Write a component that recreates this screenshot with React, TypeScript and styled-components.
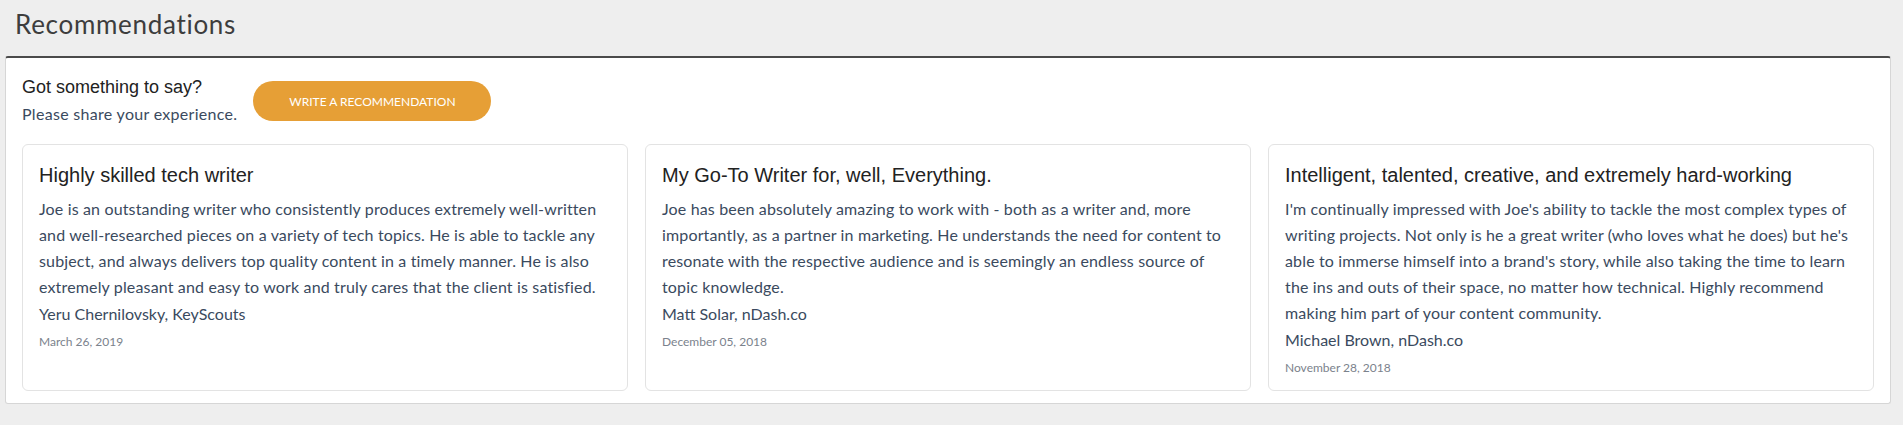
import styled, { createGlobalStyle } from "styled-components";

interface IRecommendation {
    title: string;
    body: string;
    author: string;
    date: string;
}

const recommendations: IRecommendation[] = [
    {
        title: "Highly skilled tech writer",
        body: "Joe is an outstanding writer who consistently produces extremely well-written and well-researched pieces on a variety of tech topics. He is able to tackle any subject, and always delivers top quality content in a timely manner. He is also extremely pleasant and easy to work and truly cares that the client is satisfied.",
        author: "Yeru Chernilovsky, KeyScouts",
        date: "March 26, 2019",
    },
    {
        title: "My Go-To Writer for, well, Everything.",
        body: "Joe has been absolutely amazing to work with - both as a writer and, more importantly, as a partner in marketing. He understands the need for content to resonate with the respective audience and is seemingly an endless source of topic knowledge.",
        author: "Matt Solar, nDash.co",
        date: "December 05, 2018",
    },
    {
        title: "Intelligent, talented, creative, and extremely hard-working",
        body: "I'm continually impressed with Joe's ability to tackle the most complex types of writing projects. Not only is he a great writer (who loves what he does) but he's able to immerse himself into a brand's story, while also taking the time to learn the ins and outs of their space, no matter how technical. Highly recommend making him part of your content community.",
        author: "Michael Brown, nDash.co",
        date: "November 28, 2018",
    },
];

const App = () => {
    return (
        <>
            <GlobalStyle />
            <Page>
                <Heading>Recommendations</Heading>
                <Panel>
                    <PanelHeader>
                        <Intro>
                            <IntroTitle>Got something to say?</IntroTitle>
                            <IntroText>Please share your experience.</IntroText>
                        </Intro>
                        <WriteButton type="button">Write a recommendation</WriteButton>
                    </PanelHeader>
                    <CardGrid>
                        {recommendations.map((item) => (
                            <Card key={item.title}>
                                <CardTitle>{item.title}</CardTitle>
                                <CardBody>{item.body}</CardBody>
                                <Author>{item.author}</Author>
                                <DateText>{item.date}</DateText>
                            </Card>
                        ))}
                    </CardGrid>
                </Panel>
            </Page>
        </>
    );
};

export default App;

const GlobalStyle = createGlobalStyle`
    html, body {
        margin: 0;
        padding: 0;
        background-color: #eeeeee;
    }
    * {
        box-sizing: border-box;
    }
`;

const Page = styled.div`
    background-color: #eeeeee;
    min-height: 425px;
    padding: 0 12px 0 5px;
`;

const Heading = styled.h2`
    margin: 0;
    height: 56px;
    padding: 8px 0 0 10px;
    font-family: Lato, "Open Sans", sans-serif;
    font-weight: 400;
    font-size: 26px;
    letter-spacing: 0.7px;
    line-height: 32px;
    color: #3d3d3d;
`;

const Panel = styled.section`
    background-color: #ffffff;
    border: 1px solid #d6d6d6;
    border-top: 2px solid #4a4a4a;
    border-radius: 3px;
    padding: 18px 16px 12px 16px;
`;

const PanelHeader = styled.div`
    display: flex;
    align-items: flex-start;
    gap: 16px;
`;

const Intro = styled.div`
    display: flex;
    flex-direction: column;
`;

const IntroTitle = styled.h3`
    margin: 0;
    font-family: "Liberation Sans", Arial, sans-serif;
    font-weight: 400;
    font-size: 18px;
    line-height: 22px;
    color: #222222;
`;

const IntroText = styled.p`
    margin: 6px 0 0 0;
    font-family: Lato, "Open Sans", sans-serif;
    font-size: 16px;
    letter-spacing: 0.3px;
    line-height: 20px;
    color: #3a4a5e;
`;

const WriteButton = styled.button`
    margin-top: 5px;
    width: 238px;
    height: 40px;
    border: none;
    border-radius: 20px;
    background-color: #e69f36;
    color: #ffffff;
    font-family: Lato, "Open Sans", sans-serif;
    font-size: 12px;
    text-transform: uppercase;
    cursor: pointer;
`;

const CardGrid = styled.div`
    display: grid;
    grid-template-columns: repeat(3, 1fr);
    gap: 17px;
    margin-top: 20px;
`;

const Card = styled.article`
    border: 1px solid #e3e3e3;
    border-radius: 6px;
    padding: 18px 16px 13px 16px;
    display: flex;
    flex-direction: column;
`;

const CardTitle = styled.h4`
    margin: 0;
    font-family: "Liberation Sans", Arial, sans-serif;
    font-weight: 400;
    font-size: 20px;
    line-height: 24px;
    color: #222222;
`;

const CardBody = styled.p`
    margin: 9px 0 0 0;
    font-family: Lato, "Open Sans", sans-serif;
    font-size: 16px;
    letter-spacing: 0.15px;
    line-height: 26px;
    color: #3a4a5e;
`;

const Author = styled.div`
    margin-top: 2px;
    font-family: Lato, "Open Sans", sans-serif;
    font-size: 16px;
    line-height: 24px;
    color: #3a4a5e;
`;

const DateText = styled.div`
    margin-top: 7px;
    font-family: Lato, "Open Sans", sans-serif;
    font-size: 12px;
    line-height: 18px;
    color: #7b828c;
`;
